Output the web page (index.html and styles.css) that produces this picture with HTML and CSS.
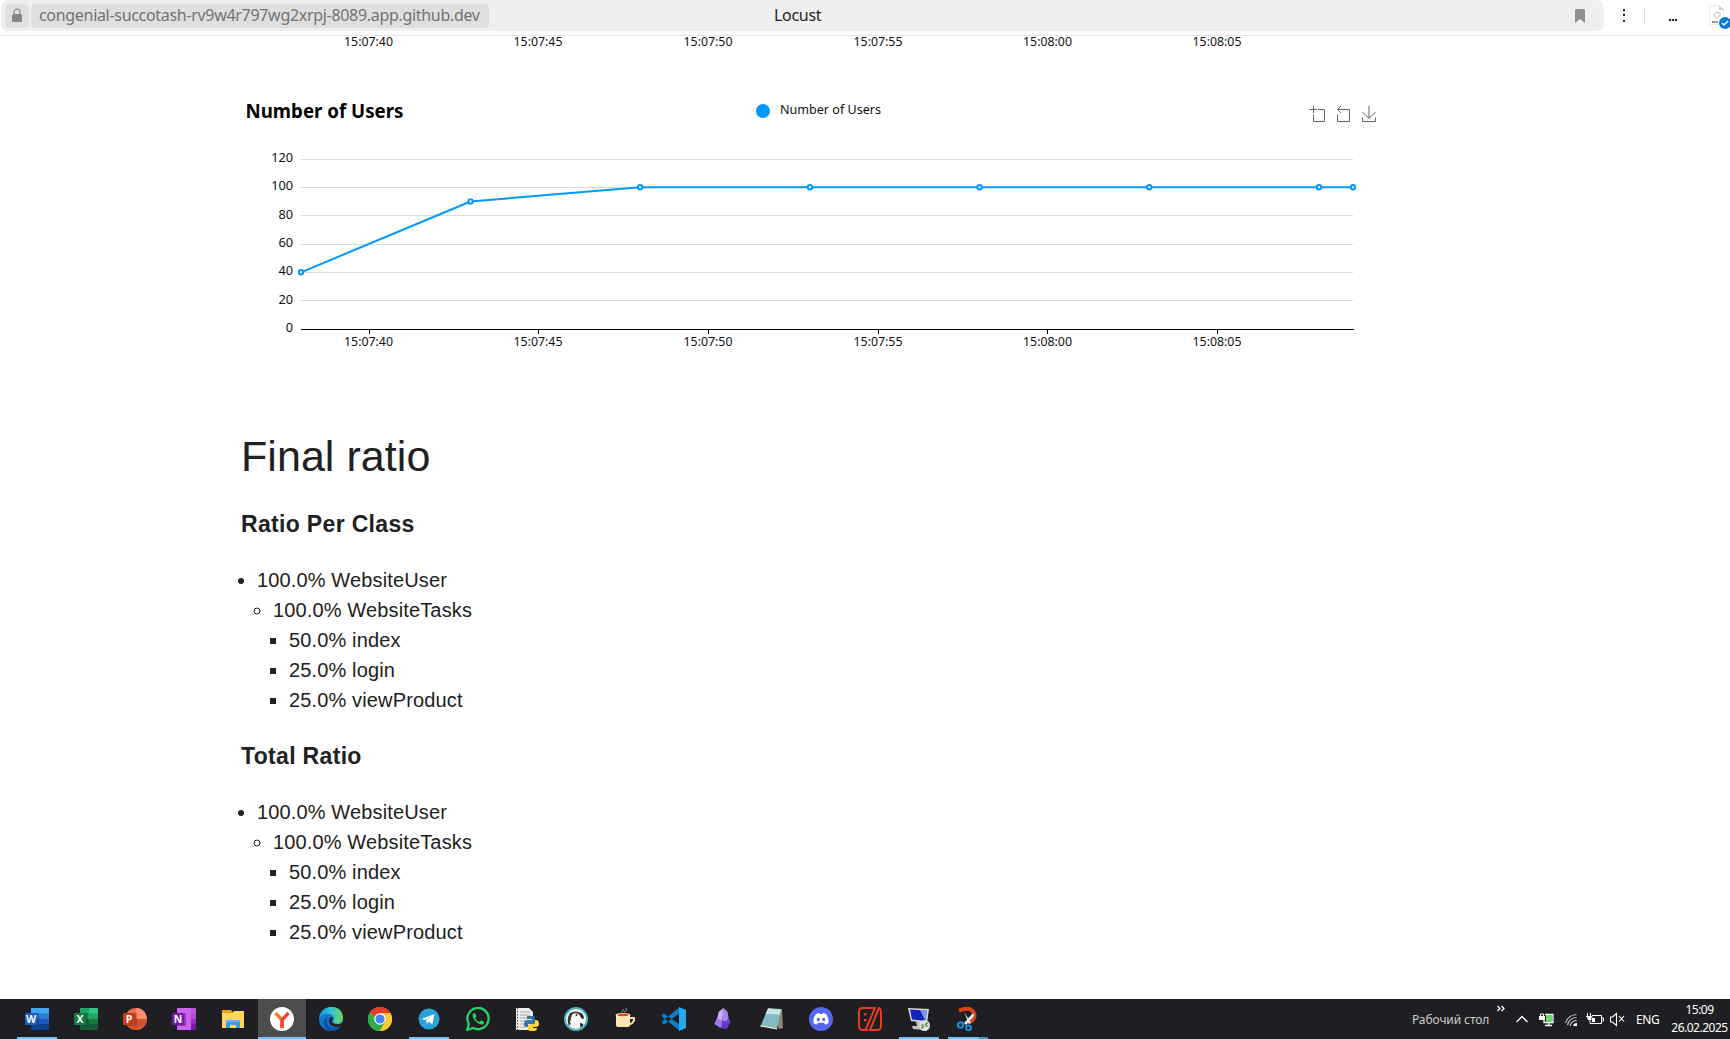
FILE: index.html
```html
<!DOCTYPE html>
<html lang="en">
<head>
<meta charset="utf-8">
<title>Locust</title>
<link rel="stylesheet" href="styles.css">
</head>
<body>
<header class="browser">
  <div class="address">
    <span class="pill lock"><svg width="12" height="16" viewBox="0 0 12 16"><path d="M3 7V4.200a3 3 0 0 1 6 0V7" fill="none" stroke="#8a8a8a" stroke-width="1.200"/><rect x="1" y="6" width="10" height="8" rx="1.500" fill="#858585"/></svg></span>
    <span class="pill url"><span class="url-text">congenial-succotash-rv9w4r797wg2xrpj-8089.app.github.dev</span></span>
    <span class="page-title">Locust</span>
    <svg class="bookmark" width="10" height="14" viewBox="0 0 10 14"><path d="M0 1.500Q0 0 1.500 0h7Q10 0 10 1.500V14L5 10 0 14z" fill="#8e8e8e"/></svg>
  </div>
  <svg class="actions" width="126" height="31" viewBox="0 0 126 31">
    <path d="M19 9h2v2h-2zM19 14h2v2h-2zM19 20h2v2h-2zM65 19h2v2h-2zM68 19h2v2h-2zM71 19h2v2h-2z" fill="#222"/>
    <path d="M40.500 7v16" stroke="#ddd"/>
    <path d="M105.500 5.500h10l4 4v15h-14z" fill="#fff" stroke="#ececec"/>
    <path d="M115 5.500v4.500h4.500z" fill="#ccc"/>
    <path d="M110 14l3-2 3.500 1.500-1 3-2.500 1.500-2-1z" fill="none" stroke="#d4d4d4" stroke-width="1.500"/>
    <path d="M108 22h6" stroke="#777" stroke-width="2" stroke-dasharray="1.500 .6"/>
    <circle cx="121" cy="23" r="6" fill="#0078d7"/><path d="M118 23l2 2 4-4" fill="none" stroke="#fff" stroke-width="1.400"/>
  </svg>
</header>

<main class="report">
  <svg class="chart" width="1200" height="395" viewBox="230 36 1200 395">
    <g class="tick-label">
      <text x="344" y="46.200" textLength="49" lengthAdjust="spacingAndGlyphs">15:07:40</text>
      <text x="513.500" y="46.200" textLength="49" lengthAdjust="spacingAndGlyphs">15:07:45</text>
      <text x="683.500" y="46.200" textLength="49" lengthAdjust="spacingAndGlyphs">15:07:50</text>
      <text x="853.500" y="46.200" textLength="49" lengthAdjust="spacingAndGlyphs">15:07:55</text>
      <text x="1023" y="46.200" textLength="49" lengthAdjust="spacingAndGlyphs">15:08:00</text>
      <text x="1192.500" y="46.200" textLength="49" lengthAdjust="spacingAndGlyphs">15:08:05</text>
    </g>
    <text class="chart-title" x="245.500" y="118" textLength="158" lengthAdjust="spacingAndGlyphs">Number of Users</text>
    <circle cx="763" cy="111" r="7" fill="#09f"/>
    <text class="legend" x="780" y="114" textLength="101" lengthAdjust="spacingAndGlyphs">Number of Users</text>
    <g fill="none" stroke="#666" stroke-width="1">
      <path d="M1313.500 106v7M1309 109.500h8M1318 109.500h6.500V121.500h-11v-7"/>
      <path d="M1341 106l-3.500 3.500 3.500 3.500M1338 109.500h11.500V121.500h-12v-7"/>
      <path d="M1369 106v12M1362.500 112l6.500 6.500 6.500-6.500M1362.500 117.500v4h13v-4"/>
    </g>
    <path d="M301 159.500h1052M301 187.500h1052M301 215.500h1052M301 244.500h1052M301 272.500h1052M301 300.500h1052" stroke="#dbdbdb"/>
    <path d="M301 329.500h1053M369.500 329v5M538.500 329v5M708.500 329v5M878.500 329v5M1047.500 329v5M1217.500 329v5" stroke="#000"/>
    <g class="tick-label value">
      <text x="293" y="162">120</text><text x="293" y="190.200">100</text><text x="293" y="219">80</text><text x="293" y="247.200">60</text><text x="293" y="275.400">40</text><text x="293" y="304">20</text><text x="293" y="332">0</text>
    </g>
    <g class="tick-label">
      <text x="344" y="346.200" textLength="49" lengthAdjust="spacingAndGlyphs">15:07:40</text>
      <text x="513.500" y="346.200" textLength="49" lengthAdjust="spacingAndGlyphs">15:07:45</text>
      <text x="683.500" y="346.200" textLength="49" lengthAdjust="spacingAndGlyphs">15:07:50</text>
      <text x="853.500" y="346.200" textLength="49" lengthAdjust="spacingAndGlyphs">15:07:55</text>
      <text x="1023" y="346.200" textLength="49" lengthAdjust="spacingAndGlyphs">15:08:00</text>
      <text x="1192.500" y="346.200" textLength="49" lengthAdjust="spacingAndGlyphs">15:08:05</text>
    </g>
    <path d="M301 272.300L470.500 201.500 640 187.300H1353" fill="none" stroke="#09f" stroke-width="2" stroke-linejoin="round"/>
    <g fill="#fff" stroke="#09f" stroke-width="2">
      <circle cx="301" cy="272.300" r="2.200"/><circle cx="470.500" cy="201.500" r="2.200"/><circle cx="640.200" cy="187.300" r="2.200"/><circle cx="810" cy="187.300" r="2.200"/><circle cx="979.600" cy="187.300" r="2.200"/><circle cx="1149.300" cy="187.300" r="2.200"/><circle cx="1319" cy="187.300" r="2.200"/><circle cx="1353" cy="187.300" r="2.200"/>
    </g>
  </svg>

  <section class="ratios">
    <h1>Final ratio</h1>
    <h2>Ratio Per Class</h2>
    <ul>
      <li>100.0% WebsiteUser
        <ul><li>100.0% WebsiteTasks
          <ul><li>50.0% index</li><li>25.0% login</li><li>25.0% viewProduct</li></ul>
        </li></ul>
      </li>
    </ul>
    <h2>Total Ratio</h2>
    <ul>
      <li>100.0% WebsiteUser
        <ul><li>100.0% WebsiteTasks
          <ul><li>50.0% index</li><li>25.0% login</li><li>25.0% viewProduct</li></ul>
        </li></ul>
      </li>
    </ul>
  </section>
</main>

<footer class="taskbar">
  <div class="apps">
    <span class="app running"><svg viewBox="0 0 24 24"><path d="M6 1h18v6H6z" fill="#41a5ee"/><path d="M6 6.500h18V12H6z" fill="#2b7cd3"/><path d="M6 12h18v5.500H6z" fill="#185abd"/><path d="M6 17.500h18V23H6z" fill="#103f91"/><path d="M6 6h8v13H6z" fill="#103f91" opacity=".5"/><rect y="6" width="12" height="12" rx="1" fill="#185abd"/><text class="tile" x="6" y="15.500">W</text></svg></span>
    <span class="app"><svg viewBox="0 0 24 24"><path d="M6 1h9v11H6z" fill="#21a366"/><path d="M15 1h9v6h-9z" fill="#33c481"/><path d="M15 6.500h9V12h-9z" fill="#21a366"/><path d="M6 12h9v11H6z" fill="#185c37"/><path d="M15 12h9v5.500h-9z" fill="#107c41"/><path d="M15 17.500h9V23h-9z" fill="#185c37"/><path d="M6 6h8v13H6z" fill="#0d4a2b" opacity=".5"/><rect y="6" width="12" height="12" rx="1" fill="#107c41"/><text class="tile" x="6" y="15.500">X</text></svg></span>
    <span class="app"><svg viewBox="0 0 24 24"><circle cx="13" cy="12" r="11" fill="#ed6c47"/><path d="M13 1a11 11 0 0 1 11 11H13z" fill="#ff8f6b"/><path d="M2 12h22a11 11 0 0 1-22 0z" fill="#d35230"/><path d="M5 6h9v13H5z" fill="#7e2612" opacity=".4"/><rect y="6" width="12" height="12" rx="1" fill="#c43e1c"/><text class="tile" x="6" y="15.500">P</text></svg></span>
    <span class="app"><svg viewBox="0 0 24 24"><path d="M5 1h15v22H5z" fill="#ca64ea"/><path d="M19 1h5v6h-5z" fill="#b858dc"/><path d="M19 6.500h5V12h-5z" fill="#ae4bd5"/><path d="M19 12h5v5.500h-5z" fill="#9332bf"/><path d="M19 17.500h5V23h-5z" fill="#7719aa"/><path d="M5 6h9v13H5z" fill="#58127d" opacity=".5"/><rect y="6" width="12" height="12" rx="1" fill="#7719aa"/><text class="tile" x="6" y="15.500">N</text></svg></span>
    <span class="app"><svg viewBox="0 0 24 24"><path d="M1 3h9l2 3v5H1z" fill="#e8a40c"/><path d="M1 6h10l2-2h10v17H1z" fill="#ffd65c"/><path d="M5 13h14v8h-4v-3H9v3H5z" fill="#3b9be0"/><path d="M5 13h14v2H5z" fill="#6ab5ec"/></svg></span>
    <span class="app active"><svg viewBox="0 0 24 24"><circle cx="12" cy="12" r="12" fill="#fff"/><path d="M5.500 6l6.500 7v8" fill="none" stroke="#ff7a2e" stroke-width="3.400"/><path d="M18.500 6L12 13v8" fill="none" stroke="#fb3f3a" stroke-width="3.400"/></svg></span>
    <span class="app"><svg viewBox="0 0 24 24"><defs><linearGradient id="edge" x1="0" x2="1"><stop offset="0" stop-color="#1a88d8"/><stop offset=".5" stop-color="#32c4dd"/><stop offset="1" stop-color="#6ad84c"/></linearGradient></defs><circle cx="12" cy="12" r="12" fill="#1479ca"/><path d="M0 12C1-4 24-4 24 11c0 5-5 7-9 5-2-2 2-4-1-7C10 5 2 7 0 12z" fill="url(#edge)"/><path d="M8 12c-2 7 5 11 14 7-3 4-9 6-13 4-7-4-5-11 0-13z" fill="#0c4ea0"/><path d="M13.500 15.500c3 3 8 2 10.500-.5v2l-2 2c-4 2-11 1-12-4-.5-3 1-5 3-5 2 2-1 3 .5 5.500z" fill="#202226"/></svg></span>
    <span class="app"><svg viewBox="0 0 24 24"><circle cx="12" cy="12" r="12" fill="#fbc116"/><path d="M12 12L1.600 6A12 12 0 0 1 22.400 6z" fill="#e33b2e"/><path d="M1.600 6A12 12 0 0 0 12 24l5.200-9L12 12z" fill="#2da94f"/><path d="M12 24a12 12 0 0 0 10.400-18H12l5.200 9z" fill="#fcc934"/><circle cx="12" cy="12" r="5.800" fill="#fff"/><circle cx="12" cy="12" r="4.600" fill="#4285f4"/></svg></span>
    <span class="app running"><svg viewBox="0 0 24 24"><circle cx="12" cy="12" r="10.500" fill="#2ba0da"/><path d="M4.500 12L17.500 7l-2.200 10.500-3.500-2.700-2 2-.8-3.500 5.500-4-6.500 3.700z" fill="#fff"/></svg></span>
    <span class="app"><svg viewBox="0 0 24 24"><path d="M1.200 22.800l1.600-6A10.600 10.600 0 1 1 7.200 21z" fill="none" stroke="#25d366" stroke-width="2.300"/><path d="M8 6c-3 2-.5 6 2 8.500s6 4.500 8 1.500c.8-1.400-2-2-3-2.500l-1.500 1.500c-2-.6-3.500-2-4.300-4L10.500 9.500C10 8.500 9.500 6 8 6z" fill="#25d366"/></svg></span>
    <span class="app"><svg viewBox="0 0 24 24"><path d="M1 1h13l4 4v18H1z" fill="#ececec"/><path d="M2.500 1v22" stroke="#555" stroke-dasharray="1.500 1.500"/><path d="M5 5h10M5 8h10M5 11h6M5 14h5M5 17h6M5 20h6" stroke="#999" stroke-width=".8"/><path d="M13 9h5q2 0 2 2v4q0 2-2 2h-5v3h-2q-2 0-2-3 0-4 3-4h5v-1h-5q-1-3 1-3z" fill="#3775a9"/><path d="M20 13h1q3 0 3 4 0 3-3 3h-4v1h5q0 3-3 3h-4q-2 0-2-2v-3q0-2 2-2h3q2 0 2-2z" fill="#ffd43b"/></svg></span>
    <span class="app"><svg viewBox="0 0 24 24"><circle cx="12" cy="12" r="11" fill="#f5f5f2" stroke="#4eb6bf" stroke-width="2"/><path d="M6 6q6-3 11 0 3 2 3 5-1 2-3 0-2-3-5-2-3 2-4 6l-3 4q-3-7 1-13z" fill="#3c3935"/><path d="M8 7.500q4-2.500 7 0l2 3-3 1-4 3-2 3-2-2 1-4z" fill="#fff"/><circle cx="12.500" cy="8" r=".9" fill="#222"/><path d="M17 6l2.500 3-1 2-2-2zM16 16q3 0 3.500 2l-3 3z" fill="#222"/></svg></span>
    <span class="app"><svg viewBox="0 0 24 24"><g transform="translate(-1 0)"><path d="M4 8h14v10q0 2-2 2H6q-2 0-2-2z" fill="#ffe6b4"/><path d="M18 11h4v2q-1 4-5 4" fill="none" stroke="#ffe0a4" stroke-width="2"/><ellipse cx="11" cy="8" rx="7.500" ry="2" fill="#fff1cf"/><ellipse cx="11" cy="8" rx="5.500" ry="1.200" fill="#d54b1a"/><path d="M9 5q4-1 2-3M12 5q4-1 2-4" fill="none" stroke="#888"/></g></svg></span>
    <span class="app"><svg viewBox="0 0 24 24"><path d="M0 8l2-1.500L18 18v6L0 9.500zM0 16l2 1.500L18 6V0L0 14.500z" fill="#0d7fc9"/><path d="M17 0l7 3v18l-7 3z" fill="#28a8ef"/></svg></span>
    <span class="app"><svg viewBox="0 0 24 24"><g transform="translate(-.5 0)"><path d="M13 1l4 4 1 6 2 4-4 7-5-1-7-4 3-8z" fill="#7f4ed8"/><path d="M13 1L8 5 7 12l4 2 2-6z" fill="#c7abf4"/><path d="M6 12l-2 5 6 4q2-4 1-7z" fill="#9e77ea"/><path d="M13 1l4 4 1 6-5 5-1-6z" fill="#a585e7"/><path d="M12 14l8 1-4 7-5-1z" fill="#6338bc"/></g></svg></span>
    <span class="app"><svg viewBox="0 0 24 24"><path d="M8 1l14 1 1 19-4 1z" fill="#8e8873"/><path d="M8 1.500l13 1L17 21 1 18z" fill="#81b9c5"/><path d="M8 1.500l13 1-1 5L5.500 7z" fill="#c4e5e8"/><path d="M1 18l16 3v1.500L0 19.500z" fill="#e7eeee"/></svg></span>
    <span class="app"><svg viewBox="0 0 24 24"><circle cx="12" cy="12" r="12" fill="#5865f2"/><path d="M7 7q2-1 3-1l.5 1h3l.5-1q1 0 3 1 3 4 2.500 9-2 1.500-3.500 1.500l-1-1.800h-6l-1 1.800Q6.500 17.500 4.500 16 4 11 7 7z" fill="#fff"/><ellipse cx="9.300" cy="12.500" rx="1.500" ry="1.700" fill="#5865f2"/><ellipse cx="14.700" cy="12.500" rx="1.500" ry="1.700" fill="#5865f2"/></svg></span>
    <span class="app"><svg viewBox="0 0 24 24"><path d="M10 23H5q-4 0-4-4V5q0-4 4-4h12L7.500 23M12 23L21 1q2 1 2 4v14q0 4-4 4z" fill="none" stroke="#e63b22" stroke-width="2" stroke-linejoin="round"/><path d="M6 6h2.500v2.500H6zM6 12h2.500v2.500H6z" fill="#e63b22"/></svg></span>
    <span class="app running"><svg viewBox="0 0 24 24"><path d="M1 1l21 1-2 14-16-2z" fill="#dedfd8"/><path d="M3 2.500l17 1-1.500 10.500L5 12.500z" fill="#1523b8"/><path d="M13 3l7 .5-1.500 10.500z" fill="#799bea"/><path d="M9 15h7l1 4h3l-2 4-12-1-1-3h5z" fill="#bfc2be"/><circle cx="17.500" cy="18.500" r="5.500" fill="#dedfdb"/><path d="M14.500 17.500l2 2-2 2M20.500 15.500l-2 2 2 2" fill="none" stroke="#398a3a" stroke-width="1.400"/></svg></span>
    <span class="app running grouped"><svg viewBox="0 0 24 24"><path d="M3 3.500q10-4 14 1 3 4 0 8-1 2-5 2" fill="none" stroke="#d94317" stroke-width="4"/><path d="M8 5l5 12 2-1zM17 6L8 16l2 2 8-9z" fill="#ececec"/><circle cx="4.500" cy="18" r="2.700" fill="none" stroke="#1892db" stroke-width="2"/><circle cx="12.500" cy="21" r="2.400" fill="none" stroke="#1892db" stroke-width="2"/></svg></span>
  </div>
  <div class="tray">
    <span class="desktop">Рабочий стол</span>
    <svg class="tray-icons" width="140" height="40" viewBox="1492 999 140 40">
      <g fill="none" stroke="#fff" stroke-width="1.300">
        <path d="M1497.500 1006l2.500 2.500-2.500 2.500M1501.500 1006l2.500 2.500-2.500 2.500"/>
        <path d="M1516.500 1022l5.500-5.500 5.500 5.500"/>
        <path d="M1545 1014.500h8v8h-9v-3M1549 1023v2M1545 1025.500h7" />
      </g>
      <path d="M1546 1015h6v7h-6z" fill="#63dc65"/><path d="M1539 1016h6v4h-6z" fill="#fff"/><path d="M1540.500 1016v-2h3v2" fill="none" stroke="#fff"/>
      <g fill="none" stroke="#c4c4c4" stroke-width="1.200"><path d="M1565.500 1023a12 12 0 0 1 11-8.500M1567.500 1025a10 10 0 0 1 9-7.500M1570 1026a7 7 0 0 1 6.500-5.500"/></g><path d="M1573 1026a4 4 0 0 1 4-3v3z" fill="#fff"/>
      <path d="M1592 1015.500h9.500v8H1590M1602 1018h1.500v3h-1.500M1587.500 1013v3M1590.500 1013v3M1586 1016.500h6v2l-2 2v3" fill="none" stroke="#fff"/><path d="M1587 1017h4v3h-3zM1592 1018h3v4h-3z" fill="#fff"/>
      <path d="M1610.500 1017h2l4-3.500v12l-4-3.500h-2zM1619 1016l5 5.500M1624 1016l-5 5.500" fill="none" stroke="#fff" stroke-width="1.100"/>
    </svg>
    <span class="lang">ENG</span>
    <div class="clock"><span class="time">15:09</span><span class="date">26.02.2025</span></div>
  </div>
</footer>
</body>
</html>
```
FILE: styles.css
```css
* { box-sizing: border-box; }
body {
  margin: 0;
  height: 1039px;
  overflow: hidden;
  display: flex;
  flex-direction: column;
  background: #fff;
  font-family: "Noto Sans", "Open Sans", sans-serif;
}
.browser {
  flex: none;
  height: 36px;
  display: flex;
  align-items: flex-start;
  border-bottom: 1px solid #e5e5e5;
}
.address {
  width: 1603px;
  height: 31px;
  margin-left: 1px;
  padding-left: 4px;
  display: flex;
  align-items: center;
  background: #efefef;
  border-radius: 7px;
}
.pill {
  height: 24px;
  display: flex;
  align-items: center;
  background: #dfdfdf;
  border-radius: 5px;
}
.lock { width: 24px; justify-content: center; }
.url { width: 458px; margin-left: 2px; padding-left: 8px; }
.url-text { padding-bottom: 2px; font-size: 16px; color: #737373; white-space: nowrap; letter-spacing: -0.31px; }
.page-title { margin-left: 285px; padding-bottom: 2px; font-size: 16px; color: #222; letter-spacing: -0.3px; }
.bookmark { margin-left: auto; margin-right: 19px; }
.actions { flex: none; }

.report { flex: 1; min-height: 0; }
.chart { display: block; margin-left: 230px; overflow: visible; }
.tick-label { font-size: 12.800px; fill: #111; }
.value { text-anchor: end; letter-spacing: -0.1px; }
.chart-title { font-size: 18.900px; font-weight: 700; fill: #000; }
.legend { font-size: 13px; fill: #111; }

.ratios {
  margin-left: 241px;
  font-family: "Liberation Sans", Arial, sans-serif;
  color: #212121;
}
h1 { margin: 0 0 28px; font-size: 43px; font-weight: 400; line-height: 50px; letter-spacing: 0.05px; }
h2 { margin: 0 0 26px; font-size: 23px; font-weight: 700; line-height: 30px; letter-spacing: 0.33px; }
ul { margin: 0; padding-left: 16px; font-size: 20px; line-height: 30px; letter-spacing: 0.14px; }
.ratios > ul { margin-bottom: 26px; }

.taskbar {
  flex: none;
  height: 40px;
  display: flex;
  justify-content: space-between;
  background: #1f1f23;
  color: #fff;
}
.apps { display: flex; padding-left: 13px; }
.app { width: 49px; padding: 8px 0 0 12px; }
.app svg { display: block; width: 24px; height: 24px; }
.tile { font: 700 10.500px "Open Sans", sans-serif; fill: #fff; text-anchor: middle; }
.running { background: linear-gradient(#76c4f7, #76c4f7) 4px 38px / 40px 2px no-repeat; }
.active { width: 48px; padding-left: 12px; margin-right: 1px; background: linear-gradient(#76c4f7, #76c4f7) 0 38px / 48px 2px no-repeat #4d4d50; }
.grouped { background: linear-gradient(90deg, #76c4f7 31px, #5791b7 31px) 4px 38px / 40px 2px no-repeat; }
.tray { display: flex; align-items: center; font-size: 12px; }
.desktop { width: 80px; color: #ccc; white-space: nowrap; letter-spacing: -0.1px; }
.tray-icons { flex: none; }
.lang { width: 37px; padding-left: 4px; font-size: 12px; letter-spacing: -0.4px; }
.clock { width: 61px; display: flex; flex-direction: column; align-items: center; line-height: 18px; font-size: 12px; letter-spacing: -0.5px; }
```
